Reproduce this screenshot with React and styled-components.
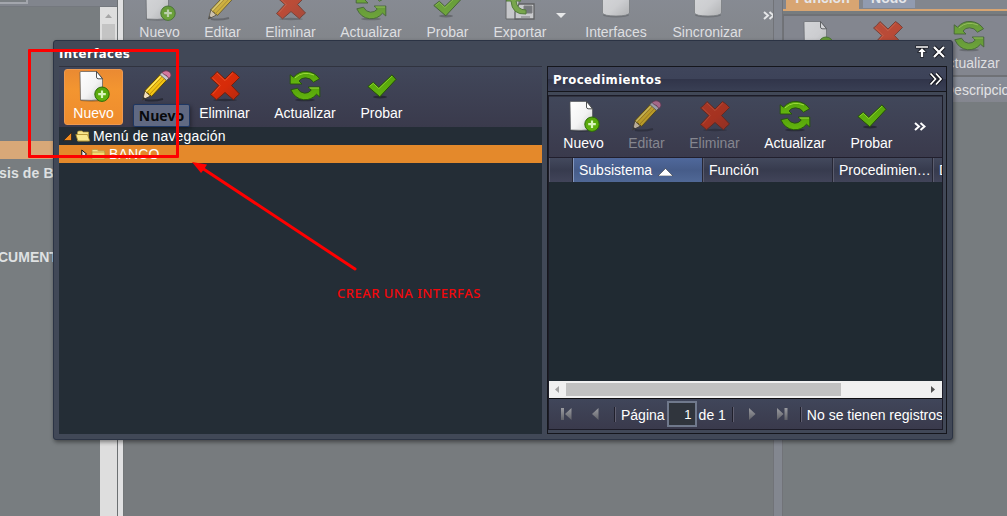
import React from 'react';
import styled, { createGlobalStyle, css } from 'styled-components';

const Global = createGlobalStyle`
  * { box-sizing: border-box; }
  body { margin: 0; background: #777c7f; font-family: "Liberation Sans", Arial, sans-serif; font-size: 14px; }
`;

const Page = styled.div`
  position: relative;
  width: 1007px;
  height: 516px;
  overflow: hidden;
  display: flex;
  background: #777c7f;
  white-space: nowrap;
`;

/* ---------- background page ---------- */

const Side = styled.div`
  width: 117px;
  flex: none;
  display: flex;
  flex-direction: column;
`;
const SideHead = styled.div`
  height: 7px;
  flex: none;
  background: #81858d;
  border-bottom: 1px solid #74787e;
`;
const SideField = styled.div`
  width: 28px;
  height: 4px;
  background: #7a7f83;
  border: solid #a3a6ad;
  border-width: 0 2px 2px 0;
`;
const SideBody = styled.div`
  flex: 1;
  display: flex;
`;
const SideTree = styled.div`
  width: 100px;
  flex: none;
  overflow: hidden;
  padding-top: 134px;
  background: #787d80;
  color: #dfe1e2;
  font-weight: bold;
`;
const SideRow = styled.div`
  height: ${p => p.$h}px;
  line-height: ${p => p.$h}px;
  background: ${p => (p.$selected ? '#d8a878' : 'transparent')};
  text-indent: ${p => p.$indent || 0}px;
  letter-spacing: ${p => p.$ls || 0}px;
`;
const SideScroll = styled.div`
  width: 17px;
  background: #dedede;
  display: flex;
  flex-direction: column;
  align-items: center;
  padding-top: 7px;
`;
const SideThumb = styled.div`
  width: 13px;
  height: 90px;
  margin-top: 6px;
  background: #c4c4c4;
`;
const Splitter = styled.div`
  width: 7px;
  flex: none;
  background: #e1e1e2;
  border-left: 1px solid #6c7072;
  border-right: 1px solid #727678;
`;
const Center = styled.div`
  width: 649px;
  flex: none;
  overflow: hidden;
  background: #777b7e;
`;
const CenterSplit = styled.div`
  width: 10px;
  flex: none;
  background: #838790;
  border-left: 1px solid #717378;
  border-right: 1px solid #717378;
`;
const East = styled.div`
  flex: 1;
  overflow: hidden;
  display: flex;
  flex-direction: column;
  background: #777c7f;
`;
const EastTabs = styled.div`
  height: 11px;
  flex: none;
  display: flex;
  gap: 4px;
  padding-left: 3px;
  background: #82868e;
  border-bottom: 2px solid #d8a572;
`;
const EastTab = styled.div`
  width: ${p => p.$w}px;
  height: ${p => (p.$on ? 9 : 8)}px;
  background: ${p => (p.$on ? '#d8a572' : '#919bb0')};
  color: #e6e7ea;
  font: bold 14px/16px "Liberation Sans", sans-serif;
  display: flex;
  justify-content: center;
  align-items: flex-end;
  overflow: hidden;
  span { margin-bottom: ${p => (p.$on ? 3 : 2)}px; }
`;
const EastBar = styled.div`
  margin-top: 3px;
  height: 63px;
  flex: none;
  border: solid #6f7176;
  border-width: 2px 0 2px 1px;
  background: #83868f;
  padding-top: 3px;
  display: flex;
`;
const EastHead = styled.div`
  height: 25px;
  flex: none;
  padding-left: 161px;
  background: linear-gradient(#888d98, #84868f);
  color: #e2e3e5;
  line-height: 26px;
`;

/* ---------- toolbars ---------- */

const Toolbar = styled.div`
  height: 61px;
  flex: none;
  display: flex;
  padding: 2px 0 0 5px;
  ${p => p.$faded ? css`
    margin-top: -14px;
    height: 70px;
    padding-left: 6px;
    background: linear-gradient(#888c95, #818488);
  ` : css`
    background: linear-gradient(#41475a, #3a3a4c);
    border-top: 1px solid #30333f;
  `}
`;
const Tool = styled.div`
  width: ${p => p.$w}px;
  height: ${p => (p.$active ? 56 : 57)}px;
  margin-left: ${p => p.$gap || 0}px;
  flex: none;
  display: flex;
  flex-direction: column;
  align-items: center;
  padding-top: 1px;
  border-radius: 3px;
  color: ${p => (p.$pale ? '#dedfe1' : p.$off ? '#85868f' : '#fff')};
  ${p => p.$active && css`background: linear-gradient(#ea8a32, #f39530 35%, #ee8c2d); border: 1px solid #ee9950; padding-top: 0;`}
`;
const Glyph = styled.svg`
  width: 32px;
  height: 32px;
  flex: none;
  opacity: ${p => (p.$pale ? 0.65 : p.$off ? 0.68 : 1)};
`;
const ToolLabel = styled.div`
  height: 17px;
  margin-top: 3px;
  line-height: 17px;
`;
const More = styled.svg`
  flex: none;
  margin: ${p => p.$m};
`;

/* ---------- dialog ---------- */

const Dialog = styled.div`
  position: absolute;
  left: 53px;
  top: 40px;
  width: 900px;
  height: 400px;
  border: 1px solid #2b3344;
  border-radius: 3px;
  background: #414857;
  box-shadow: 1px 2px 4px rgba(0, 0, 0, .45);
  padding: 0 5px 5px;
  display: flex;
  flex-direction: column;
`;
const DialogHead = styled.div`
  height: 25px;
  flex: none;
  display: flex;
  justify-content: space-between;
  padding-right: 1px;
`;
const Title = styled.div`
  color: #fff;
  font: bold 13px/26px "DejaVu Sans Condensed", "DejaVu Sans", sans-serif;
  font-stretch: condensed;
  letter-spacing: ${p => p.$ls}px;
`;
const HeadTools = styled.div`
  display: flex;
  gap: 3px;
  padding-top: 4px;
`;
const DialogBody = styled.div`
  flex: 1;
  display: flex;
  gap: 5px;
`;
const TreePanel = styled.div`
  width: 483px;
  background: #242d36;
`;
const TreeRow = styled.div`
  height: 18px;
  display: flex;
  align-items: center;
  gap: 2px;
  padding-left: ${p => p.$pad}px;
  background: ${p => (p.$on ? '#e4892b' : 'transparent')};
  color: #fff;
  line-height: 18px;
  letter-spacing: .15px;
`;
const Panel = styled.div`
  width: 400px;
  height: 368px;
  border: 1px solid #15161c;
  background: #414857;
  overflow: hidden;
`;
const PanelHead = styled.div`
  height: 25px;
  display: flex;
  justify-content: space-between;
  padding: 0 3px 0 5px;
  background: linear-gradient(#3f455b, #3d4359 48%, #31354a 52%, #393f54);
  border-bottom: 1px solid #15161c;
`;
const Grid = styled.div`
  width: 395px;
  height: 335px;
  margin-top: 3px;
  border: 1px solid #1d1c28;
  overflow: hidden;
  display: flex;
  flex-direction: column;
  background: #202a32;
`;
const Columns = styled.div`
  height: 25px;
  display: flex;
  flex: none;
  overflow: hidden;
  border-top: 1px solid #211f2d;
`;
const Column = styled.div`
  width: ${p => p.$w}px;
  flex: none;
  padding-left: 5px;
  display: flex;
  align-items: center;
  gap: 6px;
  color: #fff;
  border-left: 1px solid ${p => (p.$sorted ? '#8497bd' : '#5b5d6e')};
  border-right: 1px solid #262735;
  background: ${p => (p.$sorted ? 'linear-gradient(#4f689b, #465c89 50%, #506896)' : 'linear-gradient(#43495d, #373b4e 50%, #414459)')};
  overflow: hidden;
  svg { margin-top: 3px; flex: none; }
`;
const Rows = styled.div`
  flex: 1;
`;
const HScroll = styled.div`
  height: 18px;
  flex: none;
  display: flex;
  align-items: center;
  justify-content: space-between;
  padding: 0 7px 0 6px;
  background: #f0f0f0;
  border-bottom: 1px solid #0e0e12;
`;
const HThumb = styled.div`
  width: 275px;
  height: 13px;
  margin-left: 7px;
  margin-right: auto;
  background: #c1c1c1;
`;
const Pager = styled.div`
  height: 30px;
  flex: none;
  display: flex;
  align-items: center;
  padding-left: 12px;
  background: linear-gradient(#40465a, #3a3a4c);
  color: #fff;
  span { padding-top: 1px; }
`;
const PageIcon = styled.svg`
  width: ${p => p.$w}px;
  height: 12px;
  flex: none;
  margin-left: ${p => p.$ml || 0}px;
`;
const Divider = styled.i`
  width: 2px;
  height: 15px;
  flex: none;
  margin: 0 ${p => p.$mr}px 0 ${p => p.$ml}px;
  background: #20202c;
  border-right: 1px solid #605f70;
`;
const PageField = styled.div`
  width: 30px;
  height: 26px;
  flex: none;
  margin: 0 2px;
  padding-right: 3px;
  text-align: right;
  line-height: 24px;
  font-size: 13px;
  border: 2px solid #70798c;
  background: #30353d;
`;
const Tooltip = styled.div`
  position: absolute;
  left: 133px;
  top: 104px;
  width: 57px;
  height: 23px;
  border: 1px solid #1e3763;
  border-radius: 2px;
  background: #606982;
  color: #08090c;
  font: bold 14px/22px "Open Sans", sans-serif;
  text-align: center;
  box-shadow: 1px 2px 4px rgba(0, 0, 0, .4);
`;
const Frame = styled.div`
  position: absolute;
  left: 28px;
  top: 49px;
  width: 151px;
  height: 109px;
  border: 3px solid #fe0000;
  border-radius: 1px;
`;
const Pointer = styled.svg`
  position: absolute;
  left: 190px;
  top: 158px;
`;
const Note = styled.div`
  position: absolute;
  left: 337px;
  top: 285px;
  color: #f3070b;
  font: 500 13px/17px "Noto Sans", sans-serif;
  letter-spacing: ${p => p.$ls}px;
`;

const shapes = {
  nuevo: (
    <>
      <ellipse cx="14" cy="30.5" rx="12" ry="1.2" fill="#000" opacity=".25" />
      <path d="M2 2.5Q2 1.5 3 1.5H18.500L24.500 8.500V29.500Q13 31 2.500 30Z" fill="url(#paper)" stroke="#55585a" strokeWidth=".7" />
      <path d="M18.500 1.500L24.500 8.800H20Q18.500 8.500 18.500 7Z" fill="#fff" stroke="#3b3e40" strokeWidth=".9" />
      <circle cx="24" cy="24.2" r="7.2" fill="url(#green)" stroke="#2b6a08" />
      <path d="M24 20.500V28M20.200 24.200H27.800" stroke="#d9f5bd" strokeWidth="2.2" />
    </>
  ),
  editar: (
    <>
      <path d="M4 30Q13 31.500 22 29" stroke="#000" opacity=".35" strokeWidth="2" fill="none" />
      <path d="M1.500 30L4 20.500L9.500 26Z" fill="#f2dfbd" stroke="#3d341b" strokeWidth=".8" />
      <path d="M1.500 30L2.300 26.700L4.800 28.700Z" fill="#333" />
      <path d="M3.800 20.800L19.800 3.800L26.200 9.500L10.500 26.500Q9.600 24.500 7.800 24.700Q7.600 22.600 5.600 22.800Q5.500 21 3.800 20.800Z" fill="#f4c515" stroke="#514106" strokeWidth=".9" />
      <path d="M5.600 22.800L21.800 5.800M8 25L24.200 7.800" stroke="#b58a0c" strokeWidth=".9" />
      <path d="M5 21.500L21 4.800" stroke="#ffe968" strokeWidth="1.2" />
      <path d="M18.800 4.500L21.500 2L28 8L25.500 10.500Z" fill="#c7c9ce" stroke="#46474b" strokeWidth=".7" />
      <path d="M21 2.500Q25-.8 28.800 2.300Q31.500 5.500 28 8.400Q26.500 7.500 25.500 5.500Q23 5 21 2.500Z" fill="#d4799f" stroke="#743552" strokeWidth=".8" />
    </>
  ),
  eliminar: (
    <>
      <ellipse cx="16" cy="30" rx="12" ry="1.2" fill="#000" opacity=".3" />
      <path d="M8 1.500L16 9L23.500 1.500L27 4L30.500 7.500L22.500 15.500L30.500 24L27 27L24.500 29.800L16 22.500L7.500 29.800L5 27.500L1.500 24.500L9.800 15.500L1.500 8L4.500 5.500Z" fill="url(#red)" stroke="#70200d" strokeWidth="1" strokeLinejoin="round" />
      <path d="M3.500 8L11.300 15.500L3.800 24M8 3L16 10.700L23.500 3" stroke="#ec572f" strokeWidth=".8" fill="none" />
    </>
  ),
  actualizar: (
    <>
      <ellipse cx="16" cy="30" rx="10" ry="1.3" fill="#000" opacity=".3" />
      <g fill="url(#green)" stroke="#24520a" strokeWidth=".9" strokeLinejoin="round">
        <path d="M1.200 4.800L4.500 7.200Q10 .8 18 1.500Q26 2.200 30.500 8.800L24.500 12.200Q21.500 7.800 16.500 7.800Q12.500 7.700 10 11L13 14H1.200Z" />
        <path d="M30.800 17H19.200L22.200 20.200Q19.500 23.400 15.500 23.200Q11 23 8.500 18.200L1.800 19.800Q6 28.800 14.500 29.700Q22.400 30.300 27.500 24.200L30.800 27Z" />
      </g>
      <path d="M6 7.800Q14 .5 25 5M20.500 18H30" fill="none" stroke="#a4df45" strokeWidth=".9" />
    </>
  ),
  probar: (
    <>
      <ellipse cx="14" cy="27" rx="7" ry="1.5" fill="#000" opacity=".35" />
      <path d="M1.800 16.500L7.300 12.200L12.800 17.400L26 4.800L30 9.400L13.800 26.800Z" fill="url(#green)" stroke="#245007" strokeWidth="1" strokeLinejoin="round" />
      <path d="M3.500 16.400L7.300 13.400L12.800 18.700L26 6.200" fill="none" stroke="#8bd52d" strokeWidth=".9" />
    </>
  ),
  exportar: (
    <>
      <path d="M2 2H15V30H2Z" fill="#e9e9e9" stroke="#555" />
      <path d="M15 15H30V30H11V23Z" fill="#eee" stroke="#4b4b4b" strokeWidth="1.3" />
      <path d="M20 17H28V24H20ZM17 28H26" fill="#6f7175" stroke="#777" />
      <path d="M22 25Q8 26 7 12H2L11 4L17 12H12Q13 21 22 21Z" fill="#71b528" stroke="#38740d" />
    </>
  ),
  base: (
    <>
      <ellipse cx="16" cy="26" rx="13" ry="2.4" fill="#000" opacity=".25" />
      <path d="M2.500 2H29.500V24Q28 27 16 27Q4 27 2.500 24Z" fill="url(#paper)" stroke="#74777a" strokeWidth=".8" />
      <path d="M3 3Q16 9 29 3" fill="none" stroke="#bbb" />
    </>
  ),
};

const Defs = () => (
  <svg width="0" height="0" style={{ position: 'absolute' }} aria-hidden="true">
    <defs>
      <linearGradient id="paper" x1="0" y1="0" x2="1" y2="1"><stop offset="0" stopColor="#fff" /><stop offset=".55" stopColor="#f3f3f3" /><stop offset="1" stopColor="#c8c8c8" /></linearGradient>
      <linearGradient id="green" x1="0" y1="0" x2="0" y2="1"><stop offset="0" stopColor="#55a30a" /><stop offset="1" stopColor="#63b50e" /></linearGradient>
      <linearGradient id="red" x1="0" y1="0" x2="1" y2="1"><stop offset="0" stopColor="#d33110" /><stop offset=".5" stopColor="#d82b08" /><stop offset="1" stopColor="#b62a10" /></linearGradient>
      <linearGradient id="grey" x1="0" y1="0" x2="0" y2="1"><stop offset="0" stopColor="#9b9ca1" /><stop offset="1" stopColor="#606168" /></linearGradient>
    </defs>
  </svg>
);

const Item = ({ icon, label, w, gap, pale, off, active }) => (
  <Tool $w={w} $gap={gap} $pale={pale} $off={off} $active={active}>
    <Glyph viewBox="0 0 32 32" $pale={pale} $off={off}>{shapes[icon]}</Glyph>
    <ToolLabel>{label}</ToolLabel>
  </Tool>
);

const StandardTools = ({ pale, active, off }) => (
  <>
    <Item icon="nuevo" label="Nuevo" w={59} pale={pale} active={active} />
    <Item icon="editar" label="Editar" w={55} gap={6} pale={pale} off={off} />
    <Item icon="eliminar" label="Eliminar" w={69} gap={6} pale={pale} off={off} />
    <Item icon="actualizar" label="Actualizar" w={80} gap={6} pale={pale} />
    <Item icon="probar" label="Probar" w={61} gap={6} pale={pale} />
  </>
);

const Chevrons = ({ m, color = '#fff', big }) => (
  <More $m={m} width={big ? 14 : 12} height={big ? 14 : 9} viewBox={big ? '0 0 14 14' : '0 0 12 9'}>
    {big
      ? <g fill="none"><path d="M1.500 1.500L6.500 7L1.500 12.500M7 1.500L12 7L7 12.500" stroke="#14151c" strokeWidth="3.6" /><path d="M1.500 1.500L6.500 7L1.500 12.500M7 1.500L12 7L7 12.500" stroke={color} strokeWidth="1.7" /></g>
      : <path d="M1 1L5 4.500L1 8M6.500 1L10.500 4.500L6.500 8" fill="none" stroke={color} strokeWidth="2" />}
  </More>
);

const Folder = ({ open }) => (
  <svg width="16" height="16" viewBox="0 0 16 16">
    <path d={open ? 'M2.500 4L3.500 3H7L8.200 4H13.500V13H2.500Z' : 'M1 4.500L2 3.500H6L7.300 4.800H13.500V13H1Z'} fill="#f6e48b" stroke="#b5983b" strokeWidth=".7" />
    {open
      ? <path d="M.8 6.500H12.500L14.800 13H3Z" fill="#f9e88d" stroke="#a88726" strokeWidth=".8" />
      : <path d="M1 6H13.800V13H1Z" fill="#f3dc72" stroke="#b5932e" strokeWidth=".7" />}
  </svg>
);

export default function App() {
  return (
    <Page>
      <Global />
      <Defs />
      <Side>
        <SideHead><SideField /></SideHead>
        <SideBody>
          <SideTree>
            <SideRow $h={18} $selected />
            <SideRow $h={28} $indent={-1} $ls={0.12}>sis de Bienes</SideRow>
            <SideRow $h={56} />
            <SideRow $h={28} $indent={-2}>CUMENTOS</SideRow>
          </SideTree>
          <SideScroll>
            <svg width="7" height="4"><path d="M0 4L3.500 0L7 4Z" fill="#a6a6a6" /></svg>
            <SideThumb />
          </SideScroll>
        </SideBody>
      </Side>
      <Splitter />
      <Center>
        <Toolbar $faded>
          <StandardTools pale />
          <Item icon="exportar" label="Exportar" w={72} gap={6} pale />
          <More $m="25px 0 0 0" width="10" height="6"><path d="M0 0H10L5 5Z" fill="#e7e8e9" /></More>
          <Item icon="base" label="Interfaces" w={80} gap={10} pale />
          <Item icon="base" label="Sincronizar" w={89} gap={7} pale />
          <Chevrons m="23px 0 0 11px" color="#e5e6e8" />
        </Toolbar>
      </Center>
      <CenterSplit />
      <East>
        <EastTabs>
          <EastTab $w={73} $on><span>Función</span></EastTab>
          <EastTab $w={52}><span>Nodo</span></EastTab>
        </EastTabs>
        <EastBar>
          <Item icon="nuevo" label="Nuevo" w={59} gap={4} pale />
          <Item icon="eliminar" label="Eliminar" w={69} gap={6} pale off />
          <Item icon="actualizar" label="Actualizar" w={80} gap={7} pale />
        </EastBar>
        <EastHead>Descripcion</EastHead>
      </East>

      <Dialog>
        <DialogHead>
          <Title $ls={0.45}>Interfaces</Title>
          <HeadTools>
            <svg width="14" height="14" viewBox="0 0 14 14"><path d="M.5.5H13.500V3.500H9L12 7.500H9V12.500H5V7.500H2L5 3.500H.5Z" fill="#14151c" /><path d="M1 1.200H13V2.800H1ZM7 3.300L10.800 7H8.200V12H5.800V7H3.200Z" fill="#fff" /></svg>
            <svg width="14" height="14" viewBox="0 0 14 14"><path d="M2 2L12 12M12 2L2 12" stroke="#14151c" strokeWidth="4" /><path d="M2 2L12 12M12 2L2 12" stroke="#fff" strokeWidth="2.2" /></svg>
          </HeadTools>
        </DialogHead>
        <DialogBody>
          <TreePanel>
            <Toolbar>
              <StandardTools active />
            </Toolbar>
            <TreeRow $pad={4}>
              <svg width="10" height="9"><path d="M.5 8.500H8.500V.5Z" fill="#f38a1d" stroke="#151515" strokeWidth=".6" /></svg>
              <Folder open />
              <span>Menú de navegación</span>
            </TreeRow>
            <TreeRow $pad={22} $on>
              <svg width="8" height="10"><path d="M.8 1L5.500 5L.8 9Z" fill="#e8e8ee" stroke="#111" /></svg>
              <Folder />
              <span>BANCO</span>
            </TreeRow>
          </TreePanel>
          <Panel>
            <PanelHead>
              <Title $ls={0.42}>Procedimientos</Title>
              <Chevrons big m="5px 0 0" />
            </PanelHead>
            <Grid>
              <Toolbar>
                <StandardTools off />
                <Chevrons m="23px 0 0 12px" />
              </Toolbar>
              <Columns>
                <Column $w={24} />
                <Column $w={130} $sorted>
                  Subsistema
                  <svg width="15" height="8"><path d="M0 8L7.500 .5L15 8Z" fill="#fff" stroke="#222" strokeWidth=".5" /></svg>
                </Column>
                <Column $w={130}>Función</Column>
                <Column $w={100}>Procedimien…</Column>
                <Column $w={130}>Descripcion</Column>
              </Columns>
              <Rows />
              <HScroll>
                <svg width="4" height="7"><path d="M4 0V7L0 3.500Z" fill="#a3a3a3" /></svg>
                <HThumb />
                <svg width="4" height="7"><path d="M0 0V7L4 3.500Z" fill="#505050" /></svg>
              </HScroll>
              <Pager>
                <PageIcon $w={11}><path d="M0 0H3V12H0ZM10.500 0V12L4 6Z" fill="url(#grey)" /></PageIcon>
                <PageIcon $w={7} $ml={20}><path d="M6.500 0V12L0 6Z" fill="url(#grey)" /></PageIcon>
                <Divider $ml={15} $mr={5} />
                <span>Página</span>
                <PageField>1</PageField>
                <span>de 1</span>
                <Divider $ml={6} $mr={15} />
                <PageIcon $w={7}><path d="M0 0V12L6.500 6Z" fill="url(#grey)" /></PageIcon>
                <PageIcon $w={11} $ml={21}><path d="M0 0V12L6.500 6ZM7.500 0H10.500V12H7.500Z" fill="url(#grey)" /></PageIcon>
                <Divider $ml={12} $mr={5} />
                <span>No se tienen registros</span>
              </Pager>
            </Grid>
          </Panel>
        </DialogBody>
      </Dialog>

      <Tooltip>Nuevo</Tooltip>
      <Frame />
      <Pointer width="172" height="118">
        <path d="M12 10L165 111" stroke="#fe0000" strokeWidth="3" strokeLinecap="round" />
        <path d="M2 4L17 6.500L14 11.500L11 15Z" fill="#fe0000" />
      </Pointer>
      <Note $ls={0.48}>CREAR UNA INTERFAS</Note>
    </Page>
  );
}
